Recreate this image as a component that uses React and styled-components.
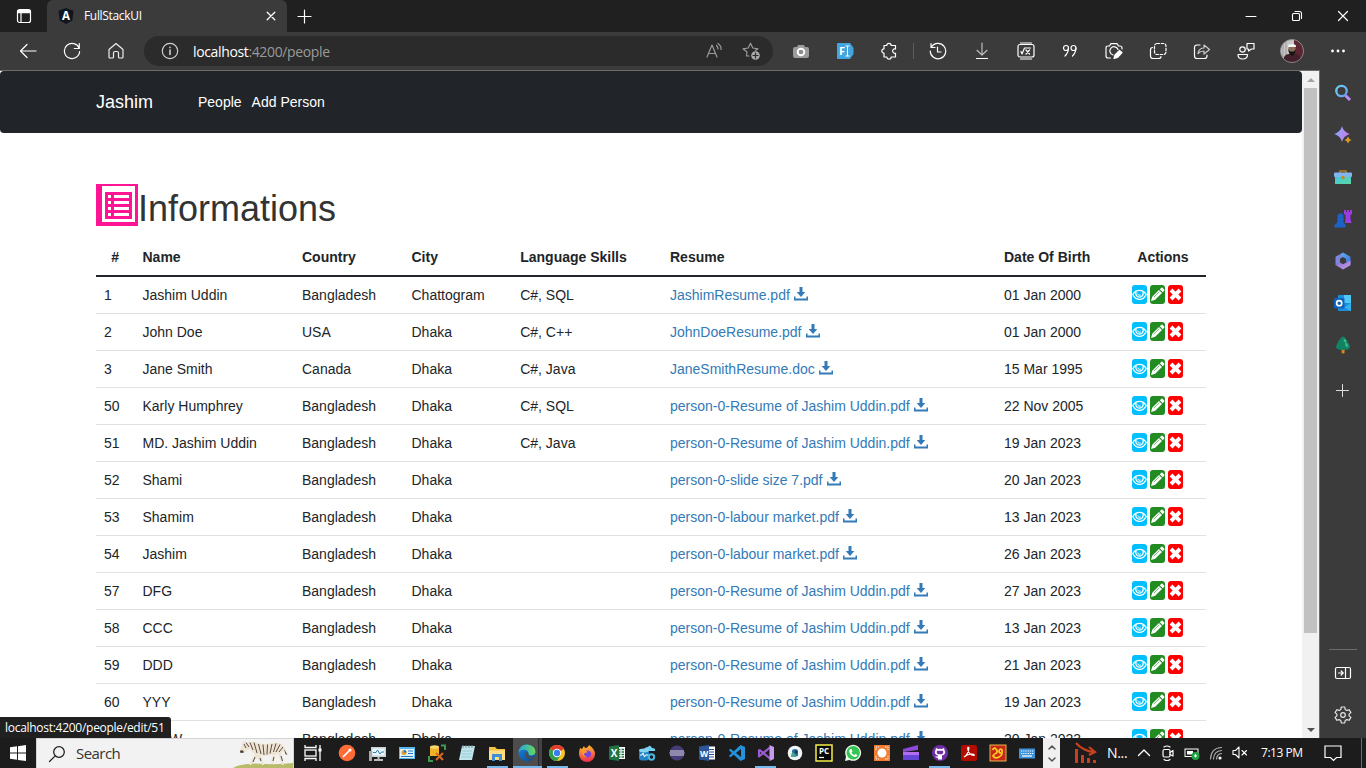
import React from "react";
import styled, { createGlobalStyle } from "styled-components";

const GlobalStyle = createGlobalStyle`
  * { box-sizing: border-box; }
  html, body { margin: 0; padding: 0; overflow: hidden; }
`;

const uiFont = `"Open Sans", "Noto Sans", sans-serif`;
const pageFont = `"Liberation Sans", Arial, sans-serif`;

/* ---------- shell ---------- */
const Desktop = styled.div`
  width: 1366px;
  height: 768px;
  display: flex;
  flex-direction: column;
  overflow: hidden;
  background: #fff;
  font-family: ${uiFont};
`;

const TabBar = styled.div`
  height: 32px;
  flex: none;
  display: flex;
  background: #202020;
`;

const TabActions = styled.div`
  width: 47px;
  display: flex;
  align-items: center;
  justify-content: center;
`;

const Tab = styled.div`
  width: 240px;
  display: flex;
  align-items: center;
  padding: 0 10px 0 11px;
  background: #3b3b3b;
  border-radius: 6px 6px 0 0;
  color: #fff;
`;

const TabTitle = styled.span`
  flex: 1;
  margin-left: 10px;
  padding-bottom: 1px;
  font-size: 12px;
  letter-spacing: -0.33px;
`;

const NewTab = styled.div`
  width: 35px;
  display: flex;
  align-items: center;
  justify-content: center;
`;

const WindowControls = styled.div`
  margin-left: auto;
  display: flex;
`;

const WindowButton = styled.div`
  width: 46px;
  display: flex;
  align-items: center;
  justify-content: center;
`;

const Toolbar = styled.div`
  height: 38px;
  flex: none;
  display: flex;
  align-items: center;
  padding-left: 6px;
  background: #3b3b3b;
`;

const ToolButton = styled.div`
  width: ${(p) => p.$w || 44}px;
  height: 38px;
  flex: none;
  display: flex;
  align-items: center;
  justify-content: center;
`;

const AddressBar = styled.div`
  width: 629px;
  height: 30px;
  margin: 0 6px;
  padding: 0 13px 0 17px;
  display: flex;
  align-items: center;
  border-radius: 15px;
  background: #2b2b2b;
`;

const Url = styled.div`
  flex: 1;
  margin-left: 14px;
  font-size: 14px;
  letter-spacing: -0.36px;
  color: #9a9a9a;
  b { font-weight: 400; color: #fff; }
`;

const AddressIcon = styled.div`
  display: flex;
  margin-left: 19px;
`;

const ToolDivider = styled.div`
  width: 1px;
  height: 16px;
  margin: 0 2px;
  background: #5d5d5d;
`;

/* ---------- middle area ---------- */
const Middle = styled.div`
  height: 668px;
  flex: none;
  display: flex;
  position: relative;
  background: #3b3b3b;
`;

const Viewport = styled.div`
  width: 1320px;
  display: flex;
  background: #fff;
  border-top: 1px solid #6c6c6c;
  border-right: 1px solid #6c6c6c;
`;

const Page = styled.div`
  width: 1302px;
  overflow: hidden;
  font-family: ${pageFont};
  font-size: 14px;
  color: #212529;
`;

const Navbar = styled.nav`
  height: 62px;
  padding-left: 96px;
  display: flex;
  align-items: center;
  border-radius: 4px;
  background: #212529;
  color: #fff;
`;

const Brand = styled.span`
  width: 102px;
  font-size: 18px;
`;

const NavLink = styled.span`
  margin-right: 10px;
`;

const Main = styled.main`
  width: 1206px;
  padding: 51px 0 0 96px;
`;

const Heading = styled.h1`
  height: 42px;
  margin: 0 0 12px;
  display: flex;
  align-items: flex-start;
  font-size: 36px;
  font-weight: 400;
  color: #333;
  line-height: 50px;
`;

const Table = styled.table`
  width: 1110px;
  table-layout: fixed;
  border-collapse: separate;
  border-spacing: 0;
`;

const Th = styled.th`
  height: 39px;
  padding: 0 8px;
  text-align: ${(p) => p.$align || "left"};
  border-bottom: 2px solid #212529;
`;

const Td = styled.td`
  height: 37px;
  padding: 0 8px 1px;
  white-space: nowrap;
  border-bottom: 1px solid #dee2e6;
`;

const ResumeLink = styled.span`
  display: inline-flex;
  align-items: center;
  gap: 4px;
  color: #337ab7;
  svg { margin-top: -1px; }
`;

const Actions = styled.div`
  display: flex;
  gap: 3px;
  padding-left: 4px;
`;

const ActionButton = styled.span`
  width: 15px;
  height: 19px;
  display: flex;
  align-items: center;
  justify-content: center;
  border-radius: 3px;
  background: ${(p) => p.$color};
`;

const ScrollTrack = styled.div`
  width: 17px;
  display: flex;
  flex-direction: column;
  align-items: center;
  background: #f1f1f1;
`;

const ScrollArrow = styled.div`
  height: 17px;
  width: 17px;
  display: flex;
  align-items: center;
  justify-content: center;
`;

const ScrollThumb = styled.div`
  width: 13px;
  height: 545px;
  margin-bottom: auto;
  background: #c1c1c1;
`;

const Sidebar = styled.aside`
  width: 46px;
  display: flex;
  flex-direction: column;
  align-items: center;
  padding: 2px 0 2px;
`;

const SideItem = styled.div`
  height: 42px;
  display: flex;
  align-items: center;
`;

const SideAdd = styled(SideItem)`
  height: 50px;
`;

const SideRule = styled.div`
  width: 28px;
  height: 1px;
  margin: auto 0 2px;
  background: #6c6c6c;
`;

const StatusBubble = styled.div`
  position: absolute;
  left: 0;
  bottom: 0;
  width: 171px;
  height: 21px;
  padding-left: 5px;
  line-height: 21px;
  font-size: 12px;
  letter-spacing: -0.28px;
  white-space: nowrap;
  color: #fff;
  background: #202020;
  border-radius: 0 3px 0 0;
`;

/* ---------- taskbar ---------- */
const Taskbar = styled.div`
  height: 30px;
  flex: none;
  display: flex;
  background: #1c1c1c;
  color: #fff;
`;

const StartButton = styled.div`
  width: 36px;
  display: flex;
  align-items: center;
  justify-content: center;
`;

const SearchBox = styled.div`
  width: 258px;
  display: flex;
  align-items: center;
  padding-left: 11px;
  background: #f2f2f2;
  border: 1px solid #d4d4d4;
  border-bottom: 0;
  color: #333;
  font-size: 15px;
  letter-spacing: -0.55px;
`;

const SearchLabel = styled.span`
  flex: 1;
  margin-left: 10px;
  padding-bottom: 2px;
`;

const TaskSlot = styled.div`
  width: ${(p) => p.$w}px;
  flex: none;
  display: flex;
  align-items: center;
  justify-content: center;
  background: ${(p) => (p.$active ? "linear-gradient(90deg, #4d4d4d 25px, #2c2c2c 25px, #2c2c2c 26px, #434343 26px)" : "none")};
  box-shadow: ${(p) => (p.$open ? "inset 0 -2px 0 #76b9ed" : "none")};
  margin: 0 ${(p) => p.$gap || 0}px;
`;

const TaskPager = styled.div`
  width: 17px;
  margin-left: 2px;
  display: flex;
  flex-direction: column;
  align-items: center;
  justify-content: space-around;
  padding: 3px 0 2px;
  background: #f0f0f0;
`;

const NewsIcon = styled.div`
  width: 47px;
  padding-left: 5px;
  display: flex;
  align-items: center;
  justify-content: center;
`;

const NewsLabel = styled.span`
  width: 25px;
  font-size: 14px;
  line-height: 30px;
  letter-spacing: -0.3px;
`;

const TrayIcon = styled.div`
  width: ${(p) => p.$w || 24}px;
  display: flex;
  align-items: center;
  justify-content: center;
`;

const Clock = styled.span`
  width: 58px;
  margin-left: 9px;
  font-size: 12px;
  line-height: 29px;
  letter-spacing: -0.45px;
  white-space: nowrap;
`;

const ShowDesktop = styled.div`
  width: 5px;
  margin-left: auto;
  border-left: 1px solid #6a6a6a;
`;

/* ---------- icons ---------- */
const Svg = ({ w = 18, h, c = "#fff", s = 1.2, children }) => (
  <svg width={w} height={h || w} viewBox={`0 0 ${w} ${h || w}`} fill="none" stroke={c} strokeWidth={s} strokeLinecap="round" strokeLinejoin="round">
    {children}
  </svg>
);

const Pic = ({ w = 18, h, children }) => (
  <svg width={w} height={h || w} viewBox={`0 0 ${w} ${h || w}`}>{children}</svg>
);

const IconText = styled.text`
  font-family: ${(p) => p.$font || uiFont};
  font-weight: ${(p) => p.$weight || 700};
  text-anchor: middle;
  stroke: none;
`;

const ListIcon = () => (
  <Pic w={42}>
    <path fill="#ff1493" fillRule="evenodd" d="M0 0H42V42H0ZM6 2V38H39V2Z" />
    <rect x="9" y="8" width="27" height="27" fill="#ff1493" />
    <g fill="#fff">
      {[11, 17, 23, 29].map((y) => (
        <React.Fragment key={y}>
          <rect x="12" y={y} width="3" height="3" />
          <rect x="18" y={y} width="15" height="3" />
        </React.Fragment>
      ))}
    </g>
  </Pic>
);

const DownloadIcon = () => (
  <Pic w={14}>
    <path fill="#337ab7" d="M5.500 0H8.500V5H11.300L7 10L2.700 5H5.500ZM0 9.500H1.500V11.500H12.500V9.500H14V13.500H0Z" />
  </Pic>
);

const EyeIcon = () => (
  <Svg w={15} h={14} s={1.3}>
    <path d="M.8 6.500C2.400 3.800 4.800 2.400 7.500 2.400S12.600 3.800 14.200 6.500C12.600 9.800 10.200 11.400 7.500 11.400S2.400 9.800 .8 6.500Z" />
    <path d="M4 4.300A3.700 3.700 0 1 0 11 4.300" />
    <path d="M5.800 6A1.800 1.800 0 0 0 8.500 7.200" strokeWidth="1" />
  </Svg>
);

const PencilIcon = () => (
  <Pic w={15} h={15}>
    <path fill="#fff" d="M1 14L2.200 9.800L9 3L12 6L5.200 12.800ZM9.800 2.200L11.400 .7Q12 .2 12.600 .8L14.200 2.400Q14.800 3 14.300 3.600L12.800 5.200Z" />
    <path d="M3.800 10.200L9.400 4.600" stroke="#228b22" strokeWidth=".6" />
  </Pic>
);

const RemoveIcon = () => (
  <Pic w={13} h={13}>
    <path d="M2 2L11 11M11 2L2 11" stroke="#fff" strokeWidth="3.900" />
  </Pic>
);

const toolIcons = {
  back: <Svg s={1.2}><path d="M17 9H1.500M8 2.500L1.500 9L8 15.500" /></Svg>,
  reload: <Svg s={1.2}><path d="M16.200 6.500A7.600 7.600 0 1 0 16.600 9.500M16.300 1.500V6.500H11.300" /></Svg>,
  home: <Svg s={1.2} c="#eee"><path d="M2 7.500L9 1.500L16 7.500V15Q16 16 15 16H12.500Q11.500 16 11.500 15V11Q11.500 9.500 10 9.500H8Q6.500 9.500 6.500 11V15Q6.500 16 5.500 16H3Q2 16 2 15Z" /></Svg>,
  camera: <Pic><path fill="#9c9c9c" d="M3 5H5L6 3H12L13 5H15Q17 5 17 7V14Q17 16 15 16H3Q1 16 1 14V7Q1 5 3 5Z" /><circle cx="9" cy="10" r="3.300" fill="#8b8b8b" stroke="#fff" strokeWidth="1.900" /></Pic>,
  fi: <Pic><path fill="#42a5e0" d="M2 1H14L17.500 6V12L14 17H2Q1 17 1 16V2Q1 1 2 1Z" /><IconText x="6" y="13" fontSize="11" fill="#fff">F</IconText><path d="M9.500 4H13.500M9.500 14H13.500M11.500 4V14" stroke="#fff" /></Pic>,
  puzzle: <Svg s={1.200}><path d="M4 3.500H6.800A2.200 2.200 0 0 1 11.200 3.500H15.500V7A2.200 2.200 0 1 0 15.500 11.200V15H11.200A2.200 2.200 0 0 1 6.800 15H4V11.200A2.200 2.200 0 0 1 4 6.800Z" /></Svg>,
  history: <Svg s={1.200}><path d="M2.500 5A7.700 7.700 0 1 1 1.300 9M2 1.500V5.500H6M8.500 5V10H12" /></Svg>,
  download: <Svg s={1.200}><path stroke="#bbb" d="M9 1V13M4 8.300L9 13L14 8.300" /><path d="M3.500 16.500H14.500" /></Svg>,
  math: <Svg s={1.200}><rect x="1" y="2.500" width="16" height="12.500" rx="2" /><path d="M3.500 1H14.500M3.500 17H14.500M4 9.500L5 12L7.500 6H13.500M9 8L12.500 12M12.500 8L9 12" /></Svg>,
  quote: <Svg s={1.200}><circle cx="5" cy="6" r="2.500" /><circle cx="12.500" cy="6" r="2.500" /><path d="M7.500 6Q7.500 10.500 4 14M15 6Q15 10.500 11.500 14" /></Svg>,
  shot: <Svg s={1.200}><path d="M5.500 16H3Q1 16 1 14V6Q1 4 3 4H4.500L6 1.700H12L13.500 4H15Q17 4 17 6V7M13 7.500A4.200 4.200 0 1 0 8 13" /><path d="M9 16.500L10 13L14.500 8.500L17 10.500L12.500 15.500Z" fill="#fff" /></Svg>,
  collections: <Svg s={1.200}><path d="M3.500 5.500Q1.500 5.500 1.500 8V14Q1.500 16.500 4 16.500H9.500Q12 16.500 12 14.500" /><rect x="5.500" y="1.500" width="11.500" height="11" rx="2.500" strokeDasharray="2.500 1.700" /></Svg>,
  share: <Svg s={1.200}><path d="M7 3H4Q1.500 3 1.500 5.500V14Q1.500 16.500 4 16.500H11.500Q14 16.500 14 14V13" /><path stroke="#ccc" d="M5 11.500Q6 6 11 6V3L16.500 7.500L11 12V9Q7.500 9 5 11.500Z" /></Svg>,
  feedback: <Svg s={1.200}><circle cx="5.500" cy="7.500" r="2.700" /><path d="M1 12.500H10.500Q10.500 17 5.700 17T1 12.500ZM10 1.500H17V7H14.500L11.500 9V7H10Z" /></Svg>,
  dots: <Pic><g fill="#fff"><circle cx="3.500" cy="9" r="1.400" /><circle cx="9" cy="9" r="1.400" /><circle cx="14.500" cy="9" r="1.400" /></g></Pic>,
};

const Avatar = () => (
  <Pic w={24}>
    <defs><clipPath id="face"><circle cx="12" cy="12" r="11.500" /></clipPath></defs>
    <g clipPath="url(#face)">
      <rect width="24" height="24" fill="#c8c6c6" />
      <path d="M14 0H24V24H14Z" fill="#5b2632" />
      <path d="M3 4V20M6 2V20" stroke="#999" />
      <path d="M3 24Q3 15 9 15H15Q21 15 21 24Z" fill="#43202b" />
      <ellipse cx="12" cy="10" rx="3.600" ry="4.800" fill="#8d6b5b" />
      <path d="M8.500 10Q8 15 12 17Q16 15 15.500 10L14 12.500H10Z" fill="#181414" />
      <path d="M8 8Q7.500 5 12 5T16 8Z" fill="#f3f3f3" />
    </g>
    <circle cx="12" cy="12" r="11.500" fill="none" stroke="#8e8e8e" strokeWidth=".8" />
  </Pic>
);

const Grad = ({ id, a, b, x = 1, y = 1 }) => (
  <linearGradient id={id} x1="0" y1="0" x2={x} y2={y}><stop stopColor={a} /><stop offset="1" stopColor={b} /></linearGradient>
);

const sideIcons = [
  <Pic key="search"><defs><Grad id="s1" a="#6fd0f5" b="#6a9bf2" /></defs><path d="M11.500 11.500L16 16" stroke="#bb8df0" strokeWidth="3" /><circle cx="7.500" cy="7" r="5.200" fill="none" stroke="url(#s1)" strokeWidth="2.300" /></Pic>,
  <Pic key="spark"><defs><Grad id="s2" a="#7fb0ff" b="#c77ce8" y={0.4} /></defs><path fill="url(#s2)" d="M8 .3Q9.800 6.200 15.700 8Q9.800 9.800 8 15.700Q6.200 9.800 .3 8Q6.200 6.200 8 .3Z" /><path fill="#d89a1c" d="M14 10.500Q14.900 13.100 17.500 14Q14.900 14.900 14 17.500Q13.100 14.900 10.500 14Q13.100 13.100 14 10.500Z" /></Pic>,
  <Pic key="case"><defs><Grad id="s3" a="#3fc6e0" b="#5fd6a0" /></defs><path d="M6 5V3H12V5" fill="none" stroke="#b57e1c" strokeWidth="1.500" /><rect x="1" y="8" width="16" height="8" fill="url(#s3)" /><rect x="0" y="4.500" width="18" height="4.500" rx="1" fill="#80b5ee" /><circle cx="9" cy="9.500" r="1.700" fill="#c98b1c" /></Pic>,
  <Pic key="chess"><path fill="#9a3ce0" d="M10 0H12V2H13V0H15V2H16V0H18V4L16.500 5V9L17.500 13H11L11.500 9V5L10 4Z" /><path fill="#1d63c6" d="M.5 17.500V15Q3.500 13 4 10H3V8.500H4.300A3 3 0 1 1 8.700 8.500H10V10H9Q9.500 13 11.500 15V17.500Z" /></Pic>,
  <Pic key="m365"><defs><Grad id="s4" a="#58b4f0" b="#4468d8" /><Grad id="s5" a="#7f6fd0" b="#c99be8" /></defs><path fill="#7c86e0" d="M9 .5L1.500 4.800V13L6 10.800V6.800L10.500 4Z" /><path fill="url(#s4)" d="M9 .5L16.500 4.800V12.500L12 9.500V6.800L7 4Z" /><path fill="url(#s5)" d="M1.500 13L6 10.500L9 12.300L16.500 8.300V13.200L9 17.500Z" /></Pic>,
  <Pic key="outlook"><rect x="4" y="1" width="13" height="16" rx="1" fill="#1b8fdd" /><path fill="#50c8f5" d="M10 1H17V9H10Z" /><path d="M17 9L10 13.500L17 17Z" fill="#36b0ee" /><rect x="0" y="4" width="10.500" height="10.500" rx="1" fill="#0f63b8" /><circle cx="5.200" cy="9.200" r="2.600" fill="none" stroke="#fff" strokeWidth="1.600" /></Pic>,
  <Pic key="tree"><rect x="7.600" y="13" width="3" height="4.500" rx="1" fill="#d0871b" /><path fill="#128265" d="M9 .5Q11 .5 12.500 4Q14 5 14 6.500Q16.500 9.500 16 11.500Q15 14 9 14T2 11.500Q1.500 9.500 4 6.500Q4 5 5.500 4Q7 .5 9 .5Z" /><path d="M10.500 4L11.500 5.500M12 8L13 10" stroke="#3fc08b" strokeWidth="2" strokeLinecap="round" /></Pic>,
];

const GearIcon = () => (
  <Svg s={1.200} c="#e6e6e6">
    <circle cx="9" cy="9" r="2.300" />
    <path d="M7.300 1H10.700L11.200 3.400L12.900 4.400L15.200 3.700L16.900 6.600L15.100 8.100V9.900L16.900 11.400L15.200 14.300L12.900 13.600L11.200 14.600L10.700 17H7.300L6.800 14.600L5.100 13.600L2.800 14.300L1.100 11.400L2.900 9.900V8.100L1.100 6.600L2.800 3.700L5.100 4.400L6.800 3.400Z" />
  </Svg>
);

const Zebra = () => (
  <Pic w={60} h={28}>
    <path d="M0 28Q5 24 22 23.500Q45 25 60 23V28Z" fill="#b8bb6a" />
    <path d="M9 5L10 1L13 3Q20 1 24 3Q32 5 40 3Q47 2 51 6Q53 9 54 14L51 11L48 12L51 25H49L46 16L43 13L40 24H38L40 14Q34 17 28 15L31 25H29L24 17L18 25H16L22 14Q19 13 17 9L12 12Q7 14 7 11Z" fill="#efe3d2" />
    <path d="M13 2.500L16 7M17 2.500L20 10M21 2.500L24 13M25.500 4L28 14M30 4.500L31 15M34.500 4.500L34 14.500M39 4L37 13.500M43 3.500L40.500 12M47 4.500L43 12M50 7L46 12M11 4L13 8M22 17L20 22M27 18L28 21M48 16L49.500 21M41 17L40 21" stroke="#594b42" strokeWidth="1" />
    <path d="M7 10.500L7.500 13L11 12.500L10 10.500ZM51 9L54.500 15L52.500 14Z" fill="#43372f" />
  </Pic>
);

const taskIcons = {
  view: <Svg s={1.300}><path d="M1 1V3.500H12V1M1 17V14.500H12V17M16 1V17" strokeLinecap="butt" strokeLinejoin="miter" /><rect x="1" y="6" width="11" height="6" strokeLinejoin="miter" /><rect x="14.500" y="4.500" width="3" height="3" fill="#fff" stroke="none" /></Svg>,
  postman: <Pic><circle cx="9" cy="9" r="8.300" fill="#ff6c37" /><path d="M5 13L11 7" stroke="#fff" strokeWidth="1.700" /><circle cx="12" cy="6" r="1.600" fill="#fff" /></Pic>,
  monitor: <Pic><rect x="3" y="3" width="15" height="10" fill="#c9d2d6" /><rect x="4.500" y="4.500" width="12" height="7" fill="#e8f5fa" /><path d="M5 8.500H8L9.500 6L12 10L13.500 8H16" fill="none" stroke="#2e81b5" /><rect x="1" y="7" width="3" height="10" fill="#aaa" /><path d="M6 16H15M10.500 13V16" stroke="#bbb" strokeWidth="2" /></Pic>,
  panel: <Pic><rect x="1" y="3" width="16" height="12" fill="#57b7ea" /><rect x="2" y="5" width="14" height="9" fill="#dff3fb" /><circle cx="6" cy="8.500" r="2.500" fill="#e79b24" /><path d="M6 8.500V6A2.500 2.500 0 0 1 8.500 8.500Z" fill="#2876c3" /><path d="M10 7H15M10 9.500H15M3 12.500H15" stroke="#2876c3" /></Pic>,
  db: <Pic><path d="M2 3H11V12H2Z" fill="#efb329" /><ellipse cx="6.500" cy="3" rx="4.500" ry="1.800" fill="#f8d86e" /><path d="M1 12V17H5M13 1.500H17V6" fill="none" stroke="#3d9950" strokeWidth="2" /><path d="M8 9L15 16M15 9L8 16" stroke="#d96a23" strokeWidth="2" /></Pic>,
  notes: <Pic><path d="M4 2H17L14 16H1Z" fill="#bfe4ec" /><path d="M5 1V4M8 1V4M11 1V4M14 1V4" stroke="#6f8b92" /><path d="M4.500 7H14M4 10H13.500M3.500 13H13" stroke="#9accd8" /></Pic>,
  explorer: <Pic><path d="M1 3H7L9 5H17V15H1Z" fill="#f6c445" /><rect x="1" y="6.500" width="16" height="9.500" fill="#ffdf82" /><path d="M4 10H14V17H11V13H7V17H4Z" fill="#3e8fd8" /></Pic>,
  edge: <Pic><defs><Grad id="e1" a="#2aa3dd" b="#64d95b" y={0} /><Grad id="e2" a="#1b86d9" b="#0b4592" /></defs><circle cx="9" cy="9" r="8.500" fill="url(#e2)" /><path d="M.5 8.500Q1.500 .5 9 .5Q17 1 17.500 8Q17 11.500 13 11.500Q10 11.300 10.500 9Q9.500 5.500 5.500 5.800Q2 6 .5 8.500Z" fill="url(#e1)" /><path d="M10.200 9Q9.500 12 13 13.500Q15 13.800 16.500 12.800Q14.500 15.500 11 15Q6.500 13.500 7.500 9.500Q8.500 7.500 10.200 9Z" fill="#4d4d4d" /></Pic>,
  chrome: <Pic><circle cx="9" cy="9" r="8" fill="#f7c421" /><path d="M9 9L2.100 5A8 8 0 0 1 15.900 5Z" fill="#e33b2e" /><path d="M9 9L2.100 5A8 8 0 0 0 9 17L12.500 11Z" fill="#2f9e4f" /><circle cx="9" cy="9" r="4.200" fill="#fff" /><circle cx="9" cy="9" r="3.200" fill="#3b7ded" /></Pic>,
  firefox: <Pic><defs><Grad id="f1" a="#ffc52b" b="#f0304f" x={0.1} /></defs><path d="M2 4L4 5L6 2L7 4Q10 4 11 1Q17 5 17 10A8 8 0 0 1 1 10Q1 7 2 4Z" fill="url(#f1)" /><circle cx="9.500" cy="10" r="3.600" fill="#7a45dd" /><path d="M4 6Q8 6 10 8L6 9.500Q6 12 9 13Q4 14 4 6Z" fill="#ff9a26" /></Pic>,
  excel: <Pic><rect x="8" y="3" width="9" height="12" fill="#fff" /><path d="M10 5.500H16M10 8H16M10 10.500H16M10 13H16" stroke="#217346" strokeWidth="1.300" strokeDasharray="2.500 1" /><path d="M1 2.500L11 1V17L1 15.500Z" fill="#217346" /><IconText x="6" y="13" fontSize="10" fill="#fff">X</IconText></Pic>,
  azure: <Pic><path d="M6 7Q6 3 10 3Q12 0 14 4Q18 4 17 7Z" fill="#74d0ee" /><rect x="1" y="6" width="10" height="10.500" rx="3" fill="#2486c9" /><ellipse cx="6" cy="6.500" rx="5" ry="1.900" fill="#83d6f2" /><path d="M2 11H4L5 9L6.500 13L7.500 11H10" fill="none" stroke="#fff" /><circle cx="13.500" cy="13" r="2.700" fill="none" stroke="#48b9e5" strokeWidth="2" /></Pic>,
  eclipse: <Pic><circle cx="9" cy="9" r="7.500" fill="#453d76" /><path d="M2 7H16M1.500 9H16.500M2 11H16" stroke="#d8d3e8" strokeWidth="1.100" /></Pic>,
  word: <Pic><rect x="8" y="2.500" width="9" height="13" fill="#fff" /><path d="M10 5.500H16M10 8H16M10 10.500H16M10 13H16" stroke="#2b579a" /><path d="M1 2.500L11 1V17L1 15.500Z" fill="#2b579a" /><IconText x="6" y="12.500" fontSize="8.500" fill="#fff">W</IconText></Pic>,
  code: <Pic><path d="M12.500 1L17 3V15L12.500 17L2 7.200L.8 6L2.500 4.800L13 13V5L2.500 13.200L.8 12L12.500 1Z" fill="#2292dd" /></Pic>,
  vs: <Pic><path d="M2 5.500V12.500L13 3.500M2 5.500L13 14.500" fill="none" stroke="#9b5bd2" strokeWidth="2.200" strokeLinejoin="round" /><path d="M12.500 1L17 3V15L12.500 17Z" fill="#c59bec" /></Pic>,
  android: <Pic><circle cx="9" cy="9" r="7.300" fill="#f1f5f7" /><path d="M6 7Q6 5 9 5T12 7V12H6Z" fill="#2872a6" /><path d="M5 13Q5 9 7 8L11 13Z" fill="#49a68b" /><circle cx="10" cy="8" r="1.500" fill="#183a50" /></Pic>,
  pycharm: <Pic><rect x="1" y="1" width="16" height="16" fill="#080808" stroke="#f5ed4a" strokeWidth="1.500" /><IconText x="9" y="10" fontSize="8" fill="#fff">PC</IconText><path d="M4 13.500H9" stroke="#fff" strokeWidth="1.200" /></Pic>,
  whatsapp: <Pic><path d="M1 17L2 12.500A8 8 0 1 1 5.500 16Z" fill="#eafbea" /><circle cx="9.200" cy="8.700" r="6.700" fill="#35c552" /><path d="M6 5L7.500 5L8.500 7.500L7.500 8.500Q8.500 10.500 10.500 11L11.500 10L13.500 11Q13 13 11 13Q6 12 5 7Z" fill="#fff" /></Pic>,
  recorder: <Pic><rect x="1" y="1" width="16" height="16" fill="#f07d32" /><circle cx="9" cy="9" r="4.500" fill="#fff" /><path d="M3 6V3H6M12 3H15V6M3 12V15H6M12 15H15V12" fill="none" stroke="#fff" strokeDasharray="1.500 1" /></Pic>,
  clip: <Pic><path d="M1 5L16 1V6L1 8Z" fill="#8d49d8" /><rect x="1" y="8" width="16" height="8" fill="#6546d8" /><path d="M1 8H17V11H1Z" fill="#b36cf0" /></Pic>,
  github: <Pic><circle cx="9" cy="9" r="8" fill="#6f2da8" /><path d="M5 4L7.200 5Q9 4.600 10.800 5L13 4L13.500 6.300Q14.500 7.500 14 9.200Q13.300 11.200 11 11.500V15.500H7V14Q5 14 4 12.300L7 12.500V11.500Q4.700 11.200 4 9.200Q3.500 7.500 4.500 6.300Z" fill="#fff" /><path d="M6 6.800H12Q13 9.500 10.500 10.300H7.500Q5 9.500 6 6.800Z" fill="#6f2da8" /></Pic>,
  acrobat: <Pic><rect x="1" y="1" width="16" height="16" rx="2" fill="#b30b00" /><path d="M4 13Q8 11 9 4Q7 2 8 6Q9 11 14 11.500Q15 10 11 10Q7 10.500 4 13Z" fill="none" stroke="#fff" strokeWidth="1.200" /></Pic>,
  avro: <Pic><rect x="1" y="1" width="16" height="16" fill="#c62a17" stroke="#e9b14b" /><path d="M3.500 6Q5 3 7 5T7.500 9Q5 10 4 12Q6 15 10 13Q14 11 13 6Q11 4 10 7Q10 9 12 9" fill="none" stroke="#ffcc28" strokeWidth="1.700" /></Pic>,
  keyboard: <Pic><rect x="1" y="4.500" width="16" height="10" fill="#3d93dc" /><path d="M3 7H16M3 9.500H16" stroke="#fff" strokeWidth="1.200" strokeDasharray="1.200 1" /><path d="M4 12H14" stroke="#fff" strokeWidth="1.200" /></Pic>,
};

const pinned30 = ["postman", "monitor", "panel", "db", "notes", "explorer", "edge", "chrome", "firefox", "excel", "azure", "eclipse", "word"];
const pinned29 = ["code", "vs", "android", "pycharm", "whatsapp", "recorder", "clip", "github", "acrobat", "avro", "keyboard"];
const running = ["explorer", "chrome", "vs", "github"];

const TaskButton = ({ name, width }) => {
  if (name === "edge") return <TaskSlot $w={29} $gap={0.5} $active $open>{taskIcons.edge}</TaskSlot>;
  if (running.includes(name)) return <TaskSlot $w={21} $gap={(width - 21) / 2} $open>{taskIcons[name]}</TaskSlot>;
  return <TaskSlot $w={width}>{taskIcons[name]}</TaskSlot>;
};

/* ---------- data ---------- */
const longPdf = "person-0-Resume of Jashim Uddin.pdf";
const people = [
  ["1", "Jashim Uddin", "Bangladesh", "Chattogram", "C#, SQL", "JashimResume.pdf", "01 Jan 2000"],
  ["2", "John Doe", "USA", "Dhaka", "C#, C++", "JohnDoeResume.pdf", "01 Jan 2000"],
  ["3", "Jane Smith", "Canada", "Dhaka", "C#, Java", "JaneSmithResume.doc", "15 Mar 1995"],
  ["50", "Karly Humphrey", "Bangladesh", "Dhaka", "C#, SQL", longPdf, "22 Nov 2005"],
  ["51", "MD. Jashim Uddin", "Bangladesh", "Dhaka", "C#, Java", longPdf, "19 Jan 2023"],
  ["52", "Shami", "Bangladesh", "Dhaka", "", "person-0-slide size 7.pdf", "20 Jan 2023"],
  ["53", "Shamim", "Bangladesh", "Dhaka", "", "person-0-labour market.pdf", "13 Jan 2023"],
  ["54", "Jashim", "Bangladesh", "Dhaka", "", "person-0-labour market.pdf", "26 Jan 2023"],
  ["57", "DFG", "Bangladesh", "Dhaka", "", longPdf, "27 Jan 2023"],
  ["58", "CCC", "Bangladesh", "Dhaka", "", longPdf, "13 Jan 2023"],
  ["59", "DDD", "Bangladesh", "Dhaka", "", longPdf, "21 Jan 2023"],
  ["60", "YYY", "Bangladesh", "Dhaka", "", longPdf, "19 Jan 2023"],
  ["61", "WWW", "Bangladesh", "Dhaka", "", longPdf, "20 Jan 2023"],
];
const columnWidths = [38.5, 159.5, 109.5, 108.7, 149.8, 334, 124, 86];

const PersonRow = ({ person }) => {
  const [id, name, country, city, skills, resume, born] = person;
  return (
    <tr>
      <Td>{id}</Td>
      <Td>{name}</Td>
      <Td>{country}</Td>
      <Td>{city}</Td>
      <Td>{skills}</Td>
      <Td><ResumeLink>{resume}<DownloadIcon /></ResumeLink></Td>
      <Td>{born}</Td>
      <Td>
        <Actions>
          <ActionButton $color="#00bfff"><EyeIcon /></ActionButton>
          <ActionButton $color="#228b22"><PencilIcon /></ActionButton>
          <ActionButton $color="#ff0000"><RemoveIcon /></ActionButton>
        </Actions>
      </Td>
    </tr>
  );
};

export default function App() {
  return (
    <Desktop>
      <GlobalStyle />
      <TabBar>
        <TabActions>
          <Svg w={16} s={1.200}><rect x="1.500" y="1.500" width="13" height="13" rx="2" /><path d="M2 3H14M2 4.300H14" strokeWidth="1.800" /><path d="M5 5V14" /></Svg>
        </TabActions>
        <Tab>
          <Pic w={16}><path d="M8 0L15.500 2.700L14.300 12.500L8 16L1.700 12.500L.5 2.700Z" fill="#10151f" /><IconText x="8" y="12" fontSize="11.500" fill="#fff">A</IconText></Pic>
          <TabTitle>FullStackUI</TabTitle>
          <Svg w={12} s={1.300}><path d="M2.200 2.200L9.800 9.800M9.800 2.200L2.200 9.800" /></Svg>
        </Tab>
        <NewTab><Svg w={15} s={1.200}><path d="M7.500 1V14M1 7.500H14" /></Svg></NewTab>
        <WindowControls>
          <WindowButton><Svg w={12} s={1}><path d="M1 6.500H11" /></Svg></WindowButton>
          <WindowButton><Svg w={12} s={1.100}><rect x="1.500" y="3.500" width="7" height="7" rx="1" /><path d="M4 1.500H8.500Q10.500 1.500 10.500 3.500V8.500" /></Svg></WindowButton>
          <WindowButton><Svg w={12} s={1.200}><path d="M1.500 1.500L10.500 10.500M10.500 1.500L1.500 10.500" /></Svg></WindowButton>
        </WindowControls>
      </TabBar>

      <Toolbar>
        <ToolButton>{toolIcons.back}</ToolButton>
        <ToolButton>{toolIcons.reload}</ToolButton>
        <ToolButton>{toolIcons.home}</ToolButton>
        <AddressBar>
          <Svg s={1.200} c="#d0d0d0"><circle cx="9" cy="9" r="7.700" /><path d="M9 8V12.500M9 5.300V5.600" strokeWidth="1.600" /></Svg>
          <Url><b>localhost</b>:4200/people</Url>
          <AddressIcon><Svg c="#9a9a9a"><path d="M2 15L7 3L12 15M3.500 11.500H10.500M11.500 3.500Q13 5 13 7M13 1.500Q16.500 4 16 7.500" /></Svg></AddressIcon>
          <AddressIcon>
            <Svg c="#9a9a9a" s={1.200}><path d="M7 14H4.500L5 10L1 6.800L6.200 6L8.500 1.200L10.800 6L16 6.800L13.500 8.500" /><circle cx="13.500" cy="13.500" r="4.300" fill="#aaa" stroke="none" /><path d="M13.500 11V16M11 13.500H16" stroke="#2b2b2b" /></Svg>
          </AddressIcon>
        </AddressBar>
        <ToolButton>{toolIcons.camera}</ToolButton>
        <ToolButton>{toolIcons.fi}</ToolButton>
        <ToolButton>{toolIcons.puzzle}</ToolButton>
        <ToolDivider />
        {["history", "download", "math", "quote", "shot", "collections", "share", "feedback"].map((n) => (
          <ToolButton key={n}>{toolIcons[n]}</ToolButton>
        ))}
        <ToolButton $w={48}><Avatar /></ToolButton>
        <ToolButton>{toolIcons.dots}</ToolButton>
      </Toolbar>

      <Middle>
        <Viewport>
          <Page>
            <Navbar>
              <Brand>Jashim</Brand>
              <NavLink>People</NavLink>
              <NavLink>Add Person</NavLink>
            </Navbar>
            <Main>
              <Heading><ListIcon />Informations</Heading>
              <Table>
                <colgroup>{columnWidths.map((w, i) => <col key={i} width={w} />)}</colgroup>
                <thead>
                  <tr>
                    <Th $align="center">#</Th>
                    <Th>Name</Th>
                    <Th>Country</Th>
                    <Th>City</Th>
                    <Th>Language Skills</Th>
                    <Th>Resume</Th>
                    <Th>Date Of Birth</Th>
                    <Th $align="center">Actions</Th>
                  </tr>
                </thead>
                <tbody>{people.map((p) => <PersonRow key={p[0]} person={p} />)}</tbody>
              </Table>
            </Main>
          </Page>
          <ScrollTrack>
            <ScrollArrow><Pic w={8} h={4}><path d="M0 4L4 0L8 4Z" fill="#a3a3a3" /></Pic></ScrollArrow>
            <ScrollThumb />
            <ScrollArrow><Pic w={8} h={4}><path d="M0 0L4 4L8 0Z" fill="#505050" /></Pic></ScrollArrow>
          </ScrollTrack>
        </Viewport>
        <Sidebar>
          {sideIcons.map((icon) => <SideItem key={icon.key}>{icon}</SideItem>)}
          <SideAdd><Svg w={14} h={14} s={1} c="#ddd"><path d="M6.500 .5V12.500M.5 6.500H12.500" /></Svg></SideAdd>
          <SideRule />
          <SideItem><Svg s={1.200}><rect x="1.500" y="3.500" width="15" height="11" rx="1.500" /><path d="M11.500 4V14M4.500 9H9M7.200 7L9.200 9L7.200 11" /></Svg></SideItem>
          <SideItem><GearIcon /></SideItem>
        </Sidebar>
        <StatusBubble>localhost:4200/people/edit/51</StatusBubble>
      </Middle>

      <Taskbar>
        <StartButton>
          <Pic w={16}><path fill="#fff" d="M0 2.300L7 1.300V7.600H0ZM8 1.200L16 0V7.600H8ZM0 8.500H7V14.800L0 13.800ZM8 8.500H16V16L8 14.900Z" /></Pic>
        </StartButton>
        <SearchBox>
          <Svg c="#222" s={1.300}><circle cx="11" cy="7" r="5.300" /><path d="M7.200 10.900L1.500 16.500" /></Svg>
          <SearchLabel>Search</SearchLabel>
          <Zebra />
        </SearchBox>
        <TaskSlot $w={38}>{taskIcons.view}</TaskSlot>
        {pinned30.map((n) => <TaskButton key={n} name={n} width={30} />)}
        {pinned29.map((n) => <TaskButton key={n} name={n} width={29} />)}
        <TaskPager>
          <Svg w={8} h={5} c="#555" s={1.500}><path d="M1 4L4 1L7 4" /></Svg>
          <Svg w={8} h={5} c="#555" s={1.500}><path d="M1 1L4 4L7 1" /></Svg>
        </TaskPager>
        <NewsIcon>
          <Pic w={24} h={24}><path d="M1 8H4V22H1ZM7 14H10V22H7ZM13 17H16V22H13ZM19 19H22V22H19Z" fill="#c8401c" /><path d="M2 2Q9 10 20 11M15 6L21 11L15 14" fill="none" stroke="#c8401c" strokeWidth="2.200" /></Pic>
        </NewsIcon>
        <NewsLabel>N...</NewsLabel>
        <TrayIcon><Svg w={14} s={1.400}><path d="M1.500 9.500L7 4L12.500 9.500" /></Svg></TrayIcon>
        <TrayIcon><Svg w={16} s={1.200}><rect x="3" y="4.500" width="7" height="7.500" rx="1.500" /><path d="M10 7.500L13 5.500V11L10 9.500M4 2Q7 0 10 2M4 14.500Q7 16.500 10 14.500" /></Svg></TrayIcon>
        <TrayIcon><Pic w={16}><rect x="1" y="4" width="13" height="7.500" fill="none" stroke="#fff" /><rect x="3" y="6" width="6" height="3.500" fill="#fff" /><circle cx="11.500" cy="11" r="4" fill="#20a344" /><path d="M11.500 9Q9 11 11.500 12.500Q14 11 11.500 9Z" fill="#fff" /></Pic></TrayIcon>
        <TrayIcon><Svg w={14} c="#aaa" s={1.200}><path d="M1.500 13Q2 2 12.500 1.500M4.500 13Q5 5 12.500 4.500M7.500 13Q8 8 12.500 7.500" /><circle cx="11" cy="12" r="1" fill="#fff" stroke="#fff" /></Svg></TrayIcon>
        <TrayIcon><Svg w={16} s={1.100}><path d="M1 5.500H3.500L7 2V13L3.500 9.500H1ZM10 5.500L14.500 10M14.500 5.500L10 10" /></Svg></TrayIcon>
        <Clock>7:13 PM</Clock>
        <TrayIcon $w={28}><Svg s={1.200}><path d="M1 2H17V13.500H12.500L9.500 16.500L6.500 13.500H1Z" strokeLinejoin="miter" /></Svg></TrayIcon>
        <ShowDesktop />
      </Taskbar>
    </Desktop>
  );
}
